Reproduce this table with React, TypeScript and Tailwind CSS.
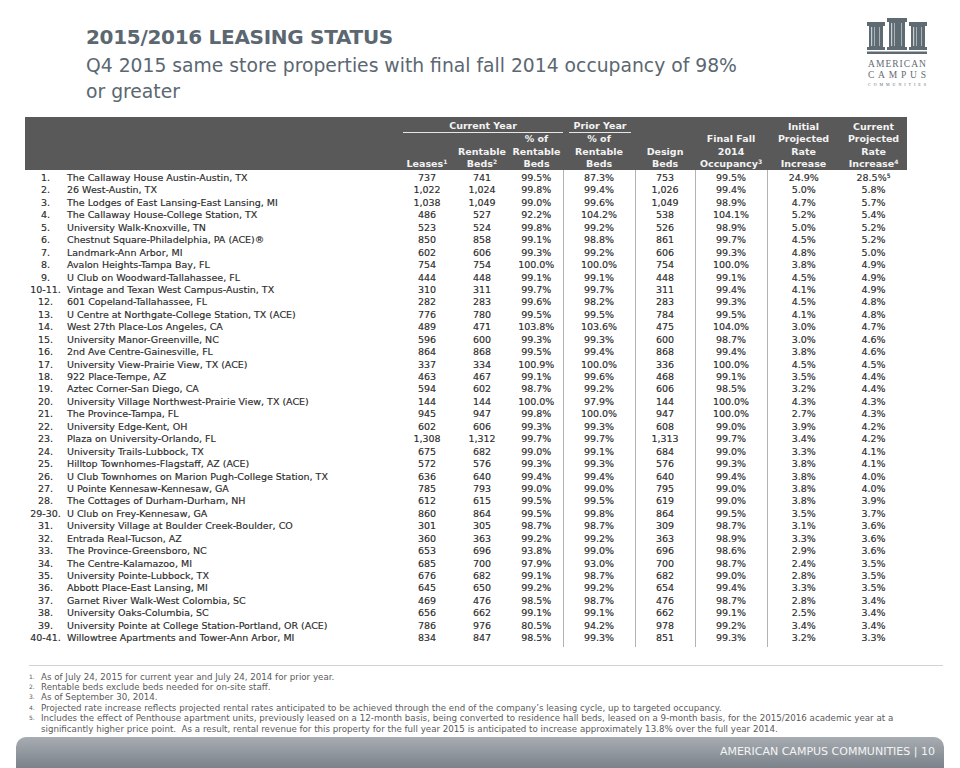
import React from "react";

type Row = [string, string, string, string, string, string, string, string, string, string];

const rows: Row[] = [
  ["1.", "The Callaway House Austin-Austin, TX", "737", "741", "99.5%", "87.3%", "753", "99.5%", "24.9%", "28.5%"],
  ["2.", "26 West-Austin, TX", "1,022", "1,024", "99.8%", "99.4%", "1,026", "99.4%", "5.0%", "5.8%"],
  ["3.", "The Lodges of East Lansing-East Lansing, MI", "1,038", "1,049", "99.0%", "99.6%", "1,049", "98.9%", "4.7%", "5.7%"],
  ["4.", "The Callaway House-College Station, TX", "486", "527", "92.2%", "104.2%", "538", "104.1%", "5.2%", "5.4%"],
  ["5.", "University Walk-Knoxville, TN", "523", "524", "99.8%", "99.2%", "526", "98.9%", "5.0%", "5.2%"],
  ["6.", "Chestnut Square-Philadelphia, PA (ACE)®", "850", "858", "99.1%", "98.8%", "861", "99.7%", "4.5%", "5.2%"],
  ["7.", "Landmark-Ann Arbor, MI", "602", "606", "99.3%", "99.2%", "606", "99.3%", "4.8%", "5.0%"],
  ["8.", "Avalon Heights-Tampa Bay, FL", "754", "754", "100.0%", "100.0%", "754", "100.0%", "3.8%", "4.9%"],
  ["9.", "U Club on Woodward-Tallahassee, FL", "444", "448", "99.1%", "99.1%", "448", "99.1%", "4.5%", "4.9%"],
  ["10-11.", "Vintage and Texan West Campus-Austin, TX", "310", "311", "99.7%", "99.7%", "311", "99.4%", "4.1%", "4.9%"],
  ["12.", "601 Copeland-Tallahassee, FL", "282", "283", "99.6%", "98.2%", "283", "99.3%", "4.5%", "4.8%"],
  ["13.", "U Centre at Northgate-College Station, TX (ACE)", "776", "780", "99.5%", "99.5%", "784", "99.5%", "4.1%", "4.8%"],
  ["14.", "West 27th Place-Los Angeles, CA", "489", "471", "103.8%", "103.6%", "475", "104.0%", "3.0%", "4.7%"],
  ["15.", "University Manor-Greenville, NC", "596", "600", "99.3%", "99.3%", "600", "98.7%", "3.0%", "4.6%"],
  ["16.", "2nd Ave Centre-Gainesville, FL", "864", "868", "99.5%", "99.4%", "868", "99.4%", "3.8%", "4.6%"],
  ["17.", "University View-Prairie View, TX (ACE)", "337", "334", "100.9%", "100.0%", "336", "100.0%", "4.5%", "4.5%"],
  ["18.", "922 Place-Tempe, AZ", "463", "467", "99.1%", "99.6%", "468", "99.1%", "3.5%", "4.4%"],
  ["19.", "Aztec Corner-San Diego, CA", "594", "602", "98.7%", "99.2%", "606", "98.5%", "3.2%", "4.4%"],
  ["20.", "University Village Northwest-Prairie View, TX (ACE)", "144", "144", "100.0%", "97.9%", "144", "100.0%", "4.3%", "4.3%"],
  ["21.", "The Province-Tampa, FL", "945", "947", "99.8%", "100.0%", "947", "100.0%", "2.7%", "4.3%"],
  ["22.", "University Edge-Kent, OH", "602", "606", "99.3%", "99.3%", "608", "99.0%", "3.9%", "4.2%"],
  ["23.", "Plaza on University-Orlando, FL", "1,308", "1,312", "99.7%", "99.7%", "1,313", "99.7%", "3.4%", "4.2%"],
  ["24.", "University Trails-Lubbock, TX", "675", "682", "99.0%", "99.1%", "684", "99.0%", "3.3%", "4.1%"],
  ["25.", "Hilltop Townhomes-Flagstaff, AZ (ACE)", "572", "576", "99.3%", "99.3%", "576", "99.3%", "3.8%", "4.1%"],
  ["26.", "U Club Townhomes on Marion Pugh-College Station, TX", "636", "640", "99.4%", "99.4%", "640", "99.4%", "3.8%", "4.0%"],
  ["27.", "U Pointe Kennesaw-Kennesaw, GA", "785", "793", "99.0%", "99.0%", "795", "99.0%", "3.8%", "4.0%"],
  ["28.", "The Cottages of Durham-Durham, NH", "612", "615", "99.5%", "99.5%", "619", "99.0%", "3.8%", "3.9%"],
  ["29-30.", "U Club on Frey-Kennesaw, GA", "860", "864", "99.5%", "99.8%", "864", "99.5%", "3.5%", "3.7%"],
  ["31.", "University Village at Boulder Creek-Boulder, CO", "301", "305", "98.7%", "98.7%", "309", "98.7%", "3.1%", "3.6%"],
  ["32.", "Entrada Real-Tucson, AZ", "360", "363", "99.2%", "99.2%", "363", "98.9%", "3.3%", "3.6%"],
  ["33.", "The Province-Greensboro, NC", "653", "696", "93.8%", "99.0%", "696", "98.6%", "2.9%", "3.6%"],
  ["34.", "The Centre-Kalamazoo, MI", "685", "700", "97.9%", "93.0%", "700", "98.7%", "2.4%", "3.5%"],
  ["35.", "University Pointe-Lubbock, TX", "676", "682", "99.1%", "98.7%", "682", "99.0%", "2.8%", "3.5%"],
  ["36.", "Abbott Place-East Lansing, MI", "645", "650", "99.2%", "99.2%", "654", "99.4%", "3.3%", "3.5%"],
  ["37.", "Garnet River Walk-West Colombia, SC", "469", "476", "98.5%", "98.7%", "476", "98.7%", "2.8%", "3.4%"],
  ["38.", "University Oaks-Columbia, SC", "656", "662", "99.1%", "99.1%", "662", "99.1%", "2.5%", "3.4%"],
  ["39.", "University Pointe at College Station-Portland, OR (ACE)", "786", "976", "80.5%", "94.2%", "978", "99.2%", "3.4%", "3.4%"],
  ["40-41.", "Willowtree Apartments and Tower-Ann Arbor, MI", "834", "847", "98.5%", "99.3%", "851", "99.3%", "3.2%", "3.3%"],
];

const footnotes = [
  "As of July 24, 2015 for current year and July 24, 2014 for prior year.",
  "Rentable beds exclude beds needed for on-site staff.",
  "As of September 30, 2014.",
  "Projected rate increase reflects projected rental rates anticipated to be achieved through the end of the company’s leasing cycle, up to targeted occupancy.",
];

function Spread({ text, className }: { text: string; className: string }) {
  return (
    <div className={`flex w-[58px] justify-between ${className}`}>
      {text.split("").map((c, i) => (
        <span key={i}>{c}</span>
      ))}
    </div>
  );
}

function Logo() {
  const shaft = (x: number, y: number, w: number, h: number) => (
    <g>
      <rect x={x} y={y} width={w} height={h} fill="#5f6b73" />
      <rect x={x + 2} y={y + 1} width={1.2} height={h - 2} fill="#c9ced2" />
      <rect x={x + 5} y={y + 1} width={1} height={h - 2} fill="#aab1b7" />
      <rect x={x + w - 4} y={y + 1} width={1} height={h - 2} fill="#aab1b7" />
    </g>
  );
  return (
    <div className="mr-[33px] ml-auto flex w-[60px] flex-col items-center pt-[18px] text-[#5f6b73]">
      <svg width="60" height="37" viewBox="0 0 60 37">
        <rect x="0" y="4" width="18" height="4" fill="#5f6b73" />
        {shaft(2, 8, 14, 21)}
        <rect x="0" y="29" width="18" height="3" fill="#5f6b73" />
        <rect x="20" y="0" width="20" height="4" fill="#5f6b73" />
        {shaft(22, 4, 16, 25)}
        <rect x="20" y="29" width="20" height="3" fill="#5f6b73" />
        <rect x="42" y="4" width="18" height="4" fill="#5f6b73" />
        {shaft(44, 8, 14, 21)}
        <rect x="42" y="29" width="18" height="3" fill="#5f6b73" />
        <rect x="0" y="33.5" width="60" height="2.5" fill="#5f6b73" />
      </svg>
      <div className="mt-[4px] font-['Liberation_Serif',serif]">
        <Spread text="AMERICAN" className="text-[9.5px] leading-[11px]" />
        <Spread text="CAMPUS" className="text-[9.5px] leading-[11px]" />
        <Spread text="COMMUNITIES" className="mt-[1px] text-[4px] leading-[6px]" />
      </div>
    </div>
  );
}

export default function App() {
  const th = "p-0 text-center align-bottom font-bold";
  const td = "p-0 text-center";
  const line = "border-l border-[#b3b3b3]";
  return (
    <div className="flex h-[768px] w-[960px] flex-col overflow-hidden bg-white font-['DejaVu_Sans','Verdana',sans-serif] text-[#2b2b2b]">
      <div className="flex h-[117px]">
        <div className="pt-[25px] pl-[86px] text-[#5b6771]">
          <div className="text-[20px] leading-[24px] font-bold tracking-[-0.3px]">2015/2016 LEASING STATUS</div>
          <div className="mt-[4px] text-[18.75px] leading-[26px]">
            Q4 2015 same store properties with final fall 2014 occupancy of 98%
            <br />
            or greater
          </div>
        </div>
        <Logo />
      </div>

      <table className="ml-[25px] w-[882px] table-fixed border-collapse text-[9.5px]">
        <colgroup>
          <col className="w-[41px]" />
          <col className="w-[334px]" />
          <col className="w-[54px]" />
          <col className="w-[56px]" />
          <col className="w-[53px]" />
          <col className="w-[72px]" />
          <col className="w-[60px]" />
          <col className="w-[72px]" />
          <col className="w-[73px]" />
          <col className="w-[67px]" />
        </colgroup>
        <thead className="bg-[#595959] leading-[12.25px] text-[#f3f3f3]">
          <tr>
            <th rowSpan={2} colSpan={2} className={th} />
            <th colSpan={3} className={`${th} pt-[3px]`}>
              <div className="ml-[3px] border-b border-[#e6e6e6]">Current Year</div>
            </th>
            <th className={`${th} pt-[3px]`}>
              <div className="mr-[4px] ml-[6px] border-b border-[#e6e6e6]">Prior Year</div>
            </th>
            <th rowSpan={2} className={th}>
              Design
              <br />
              Beds
            </th>
            <th rowSpan={2} className={th}>
              Final Fall
              <br />
              2014
              <br />
              Occupancy<sup className="text-[6px]">3</sup>
            </th>
            <th rowSpan={2} className={th}>
              Initial
              <br />
              Projected
              <br />
              Rate
              <br />
              Increase
            </th>
            <th rowSpan={2} className={th}>
              Current
              <br />
              Projected
              <br />
              Rate
              <br />
              Increase<sup className="text-[6px]">4</sup>
            </th>
          </tr>
          <tr>
            <th className={th}>
              Leases<sup className="text-[6px]">1</sup>
            </th>
            <th className={th}>
              Rentable
              <br />
              Beds<sup className="text-[6px]">2</sup>
            </th>
            <th className={th}>
              % of
              <br />
              Rentable
              <br />
              Beds
            </th>
            <th className={th}>
              % of
              <br />
              Rentable
              <br />
              Beds
            </th>
          </tr>
        </thead>
        <tbody className="leading-[12.43px] [-webkit-text-stroke:0.15px]">
          {rows.map((r, i) => {
            const pad = i === 0 ? "pt-[2px]" : i === rows.length - 1 ? "pb-[2px]" : "";
            return (
              <tr key={r[0]}>
                <td className={`${td} ${pad} whitespace-nowrap`}>{r[0]}</td>
                <td className={`${pad} p-0 pl-[1px] text-left whitespace-nowrap`}>{r[1]}</td>
                <td className={`${td} ${pad}`}>{r[2]}</td>
                <td className={`${td} ${pad}`}>{r[3]}</td>
                <td className={`${td} ${pad}`}>{r[4]}</td>
                <td className={`${td} ${pad} ${line}`}>{r[5]}</td>
                <td className={`${td} ${pad} ${line}`}>{r[6]}</td>
                <td className={`${td} ${pad} ${line}`}>{r[7]}</td>
                <td className={`${td} ${pad} ${line}`}>{r[8]}</td>
                <td className={`${td} ${pad}`}>
                  {r[9]}
                  {i === 0 ? <sup className="text-[6px]">5</sup> : null}
                </td>
              </tr>
            );
          })}
        </tbody>
      </table>

      <div className="mt-[18px] ml-[29px] h-px w-[914px] bg-[#d2d2d2]" />

      <div className="mt-[6px] pl-[29px] text-[8.7px] leading-[10.4px] text-[#5a5a5a]">
        {footnotes.map((f, i) => (
          <div key={i} className="flex">
            <span className="w-[12px] text-[6px]">{i + 1}.</span>
            <span className="whitespace-nowrap">{f}</span>
          </div>
        ))}
        <div className="flex">
          <span className="w-[12px] text-[6px]">5.</span>
          <span className="whitespace-nowrap">
            Includes the effect of Penthouse apartment units, previously leased on a 12-month basis, being converted to residence hall beds, leased on a 9-month basis, for the 2015/2016 academic year at a
            <br />
            significantly higher price point.&nbsp; As a result, rental revenue for this property for the full year 2015 is anticipated to increase approximately 13.8% over the full year 2014.
          </span>
        </div>
      </div>

      <div className="mt-auto ml-[16px] flex h-[31px] w-[928px] items-center justify-end rounded-t-[10px] bg-linear-to-b from-[#a7adb2] to-[#7b828a] pr-[9px] text-[11px] text-[#f4f4f4]">
        AMERICAN CAMPUS COMMUNITIES | 10
      </div>
    </div>
  );
}
